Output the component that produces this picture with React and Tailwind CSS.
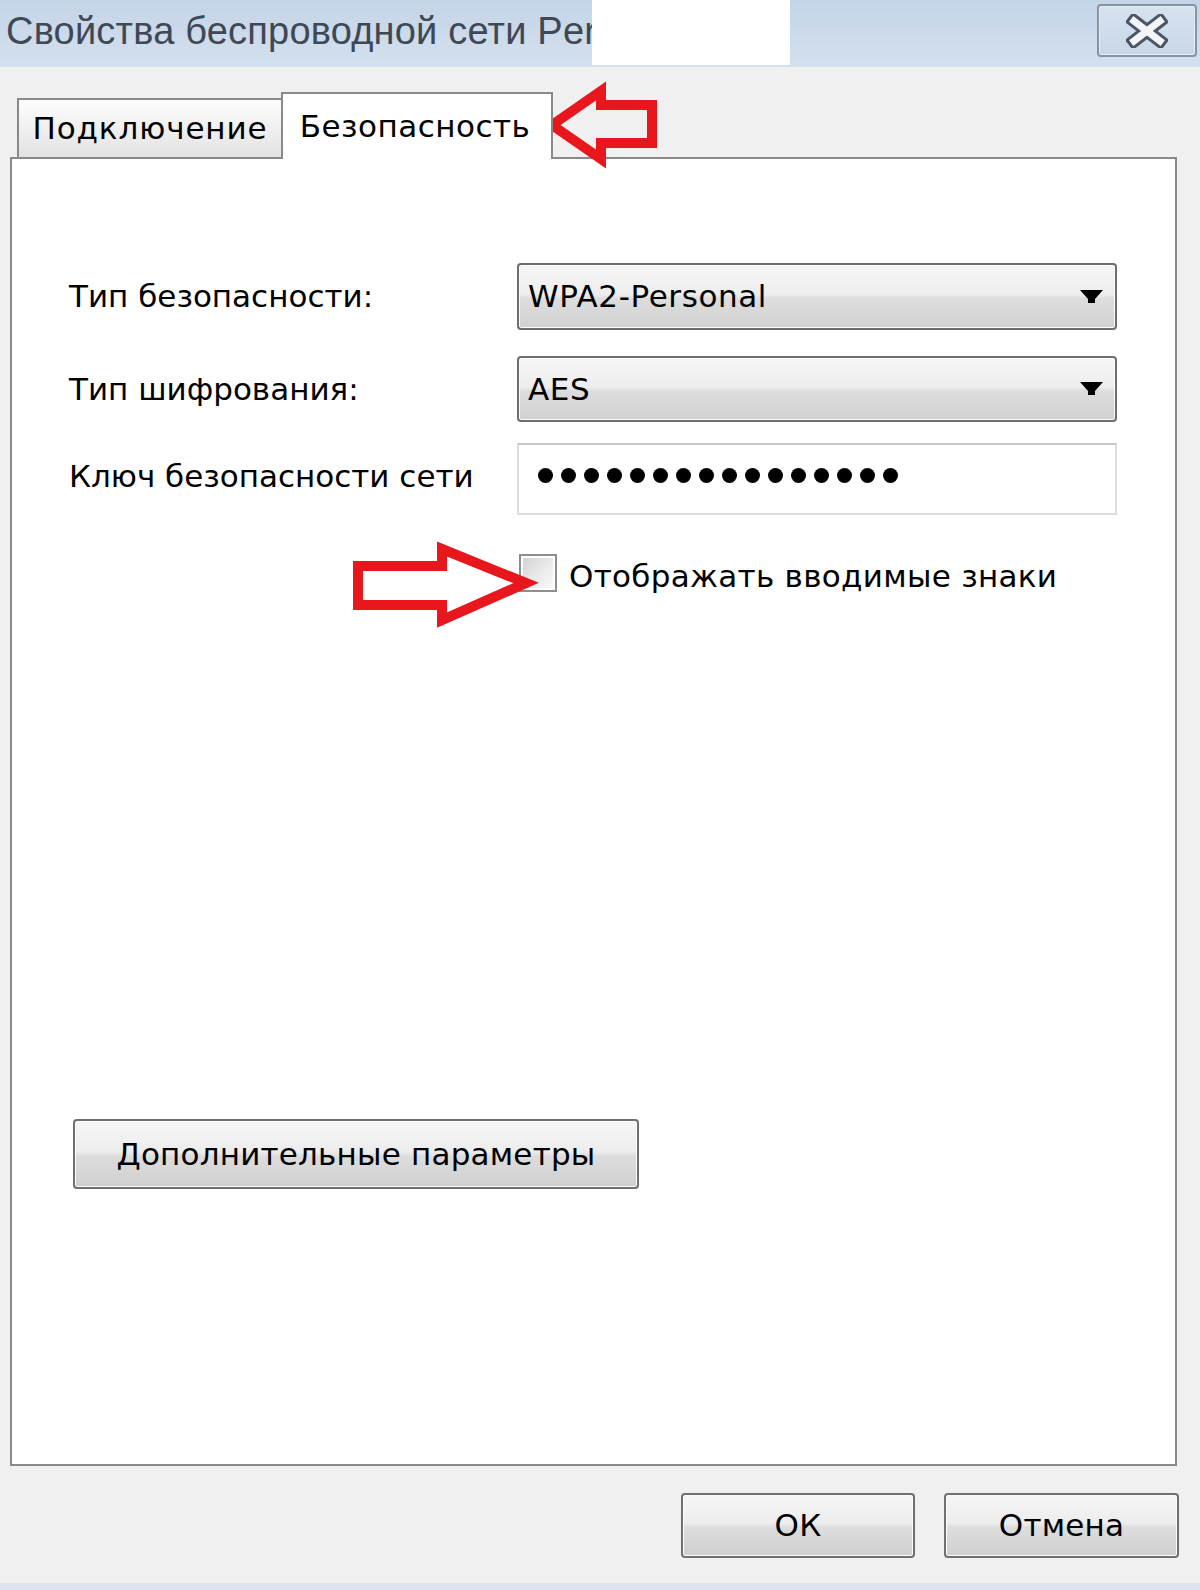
import React from "react";

const dots = Array.from({ length: 16 });

function Chevron() {
  return (
    <svg width="23" height="14" viewBox="0 0 23 14" className="shrink-0">
      <polygon points="0,0 23,0 15,9 15,13 8,13 8,9" fill="#000" />
    </svg>
  );
}

function Select({ value, h }) {
  return (
    <div
      className={`w-[600px] ${h} rounded-[4px] border-2 border-[#6e6e6e] bg-[linear-gradient(to_bottom,#f6f6f6_0%,#ededed_47%,#dddddd_53%,#d1d1d1_100%)] shadow-[inset_0_0_0_1px_#fcfcfc] flex items-center pl-[9px] pr-[12px]`}
    >
      <span className="text-[31px] leading-none tracking-[0.6px] text-black">{value}</span>
      <span className="ml-auto">
        <Chevron />
      </span>
    </div>
  );
}

function Button({ children, w, h }) {
  return (
    <div
      className={`${w} ${h} rounded-[4px] border-2 border-[#707070] bg-[linear-gradient(to_bottom,#f6f6f6_0%,#ececec_47%,#dddddd_53%,#cfcfcf_100%)] shadow-[inset_0_0_0_1px_#fcfcfc] flex items-center justify-center`}
    >
      <span className="text-[31px] leading-none tracking-[0.2px] text-black">{children}</span>
    </div>
  );
}

export default function App() {
  return (
    <div className="relative w-[1200px] h-[1590px] overflow-hidden bg-[#f0f0f0] flex flex-col font-['DejaVu_Sans',sans-serif]">
      {/* Title bar */}
      <div className="h-[67px] shrink-0 flex items-start bg-[linear-gradient(to_bottom,#c4d4e7_0%,#d3e0ee_100%)]">
        <div className="w-[592px] h-[65px] whitespace-nowrap flex items-center pl-[6px] pb-[4px]">
          <span className="font-['Liberation_Sans',sans-serif] text-[38px] leading-none tracking-[0.2px] text-[#3f4855]">
            Свойства беспроводной сети Per
          </span>
        </div>
        <div className="relative w-[198px] h-[65px] bg-white shrink-0" />
        <div className="ml-auto mr-[3px] mt-[4px] w-[100px] h-[53px] rounded-[4px] border-2 border-[#8894a4] bg-[linear-gradient(to_bottom,#d7e2ef_0%,#c9d7e7_100%)] shadow-[inset_0_0_0_1px_#e4ecf5] flex items-center justify-center">
          <svg width="42" height="34" viewBox="0 0 42 34">
            <g strokeLinecap="square">
              <line x1="8" y1="7" x2="34" y2="27" stroke="#4b5563" strokeWidth="13" />
              <line x1="34" y1="7" x2="8" y2="27" stroke="#4b5563" strokeWidth="13" />
              <line x1="8" y1="7" x2="34" y2="27" stroke="#f2f4f7" strokeWidth="7" />
              <line x1="34" y1="7" x2="8" y2="27" stroke="#f2f4f7" strokeWidth="7" />
            </g>
          </svg>
        </div>
      </div>

      {/* Tabs */}
      <div className="pt-[25px] pl-[17px] flex items-end shrink-0">
        <div className="w-[266px] h-[59px] border-2 border-b-0 border-[#898989] bg-[linear-gradient(to_bottom,#fdfdfd_0%,#f0f0f0_50%,#e2e2e2_100%)] flex items-center justify-center">
          <span className="text-[31px] leading-none tracking-[0.9px] text-black">Подключение</span>
        </div>
        <div className="relative z-10 -ml-[2px] -mb-[2px] w-[272px] h-[67px] border-2 border-b-0 border-[#898989] bg-white flex items-center justify-center pr-[4px]">
          <span className="text-[31px] leading-none tracking-[0.5px] text-black">Безопасность</span>
        </div>
      </div>

      {/* Panel */}
      <div className="ml-[10px] w-[1167px] h-[1309px] shrink-0 border-2 border-[#898989] bg-white flex flex-col">
        <div className="pt-[104px] pl-[57px] flex flex-col">
          <div className="flex items-center">
            <div className="w-[448px] text-[31px] leading-none tracking-[0px] text-black">Тип безопасности:</div>
            <Select value="WPA2-Personal" h="h-[67px]" />
          </div>
          <div className="mt-[26px] flex items-center">
            <div className="w-[448px] text-[31px] leading-none tracking-[0px] text-black">Тип шифрования:</div>
            <Select value="AES" h="h-[66px]" />
          </div>
          <div className="mt-[21px] flex items-center">
            <div className="w-[448px] text-[31px] leading-none tracking-[0px] text-black pb-[6px]">Ключ безопасности сети</div>
            <div className="w-[600px] h-[72px] border-2 border-[#dcdcdc] border-t-[#c6c6c6] bg-white flex items-center pl-[19px] pb-[8px] gap-[8px]">
              {dots.map((_, i) => (
                <span key={i} className="w-[15px] h-[15px] rounded-full bg-black shrink-0" />
              ))}
            </div>
          </div>
          <div className="mt-[39px] pl-[450px] flex items-center">
            <div className="w-[38px] h-[38px] border-2 border-[#8e8e8e] bg-white p-[2px] shrink-0">
              <div className="w-full h-full bg-[linear-gradient(135deg,#d2d2d2_0%,#e9e9e9_50%,#f8f8f8_100%)]" />
            </div>
            <span className="ml-[12px] pt-[6px] text-[31px] leading-none tracking-[0.3px] text-black">
              Отображать вводимые знаки
            </span>
          </div>
        </div>
        <div className="mt-[527px] pl-[61px]">
          <Button w="w-[566px]" h="h-[70px]">Дополнительные параметры</Button>
        </div>
      </div>

      {/* Bottom buttons */}
      <div className="mt-[27px] pr-[21px] flex justify-end gap-[29px] shrink-0">
        <Button w="w-[234px]" h="h-[65px]">ОК</Button>
        <Button w="w-[235px]" h="h-[65px]">Отмена</Button>
      </div>
      <div className="flex-1" />
      <div className="h-[7px] shrink-0 bg-[#dbe5f0]" />

      {/* Red annotation arrows */}
      <svg className="absolute left-[540px] top-[80px] pointer-events-none" width="124" height="92" viewBox="540 80 124 92">
        <polygon
          points="552,125 601,91 601,105 652,105 652,143 601,143 601,159"
          fill="none"
          stroke="#e8161d"
          strokeWidth="10"
          strokeLinejoin="miter"
        />
      </svg>
      <svg className="absolute left-[348px] top-[536px] pointer-events-none" width="194" height="96" viewBox="348 536 194 96">
        <polygon
          points="358,566 442,566 442,549 526,583 442,620 442,605 358,605"
          fill="none"
          stroke="#e8161d"
          strokeWidth="10"
          strokeLinejoin="miter"
        />
      </svg>
    </div>
  );
}
